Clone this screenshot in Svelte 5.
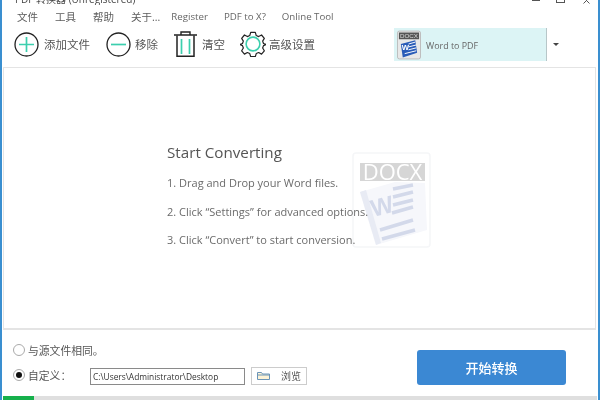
<script>
	const menus = ["文件", "工具", "帮助", "关于..."];
	const links = ["Register", "PDF to X?", "Online Tool"];
	const steps = [
		"1. Drag and Drop your Word files.",
		"2. Click “Settings” for advanced options.",
		"3. Click “Convert” to start conversion."
	];
	let saveMode = $state("custom");
	let outputPath = $state("C:\\Users\\Administrator\\Desktop");
</script>

<div class="window">
	<div class="titlebar">
		<span class="title">PDF 转换器 (Unregistered)</span>
		<div class="controls">
			<span class="min"></span>
			<span class="max"></span>
			<svg width="7" height="4" viewBox="0 0 7 4"><path d="M0 -3 L6.5 3.5 M7 -3 L.5 3.5" stroke="#555" fill="none" /></svg>
		</div>
	</div>

	<nav class="menubar">
		<div class="menus">
			{#each menus as item}
				<span>{item}</span>
			{/each}
		</div>
		<div class="links">
			{#each links as item}
				<span>{item}</span>
			{/each}
		</div>
	</nav>

	<div class="toolbar">
		<button class="tool add">
			<svg width="25" height="25" viewBox="0 0 25 25">
				<circle cx="12.5" cy="12.5" r="11.5" fill="none" stroke="#222" stroke-width="1.3" />
				<path d="M12.5 5v15M5 12.5h15" stroke="#3ccfae" stroke-width="1.7" />
			</svg>
			添加文件
		</button>
		<button class="tool remove">
			<svg width="25" height="25" viewBox="0 0 25 25">
				<circle cx="12.5" cy="12.5" r="11.5" fill="none" stroke="#222" stroke-width="1.3" />
				<path d="M5 12.5h15" stroke="#3ccfae" stroke-width="1.7" />
			</svg>
			移除
		</button>
		<button class="tool clear">
			<svg width="23" height="26" viewBox="0 0 23 26">
				<path d="M0 4h23M7 3.5V1h9v2.5" fill="none" stroke="#222" stroke-width="1.4" />
				<path d="M3 4.5v20.7h17V4.5" fill="none" stroke="#222" stroke-width="1.5" />
				<path d="M7.5 8v15M15.5 8v15" stroke="#3ccfae" stroke-width="1.7" />
			</svg>
			清空
		</button>
		<button class="tool settings">
			<svg width="26" height="26" viewBox="0 0 28 28">
				<path
					d="M11.5 1.5h5l1 3.4 2.6 1.1 3.1-1.7 3 3.6-1.8 3 .9 2.6 3 1v.1l-3 1.1-.9 2.6 1.8 3-3 3.6-3.1-1.7-2.6 1.1-1 3.3h-5l-1-3.3-2.6-1.1-3.1 1.7-3-3.6 1.8-3-.9-2.6-3-1.1v-.1l3-1 .9-2.6-1.8-3 3-3.6 3.1 1.7 2.6-1.1z"
					fill="none"
					stroke="#222"
					stroke-width="1.3"
					stroke-linejoin="round"
				/>
				<circle cx="14" cy="14" r="7.4" fill="none" stroke="#3ccfae" stroke-width="1.7" />
			</svg>
			高级设置
		</button>

		<div class="format">
			<div class="format-current">
				<svg class="doc-icon" width="24" height="30" viewBox="0 0 25 30">
					<rect x="0.5" y="0.5" width="24" height="29" rx="2" fill="#e8e8e8" stroke="#bbb" />
					<rect x="2" y="2" width="21" height="7" fill="#555" />
					<text x="12.5" y="8" text-anchor="middle" class="doc-label">DOCX</text>
					<path d="M4 14l15-4 2 13-15 5z" fill="#2a5cb8" />
					<path d="M12 14l7-2M12 17l8-2M12 20l8-2M8 24l12-3" stroke="#fff" stroke-width="1" />
					<text x="5" y="20" class="doc-w">W</text>
				</svg>
				<span>Word to PDF</span>
			</div>
			<span class="caret"></span>
		</div>
	</div>

	<main class="panel">
		<svg class="watermark" width="80" height="98" viewBox="0 0 80 98">
			<rect x="1" y="1" width="77" height="94" rx="3" fill="#fff" stroke="#f5f6f8" stroke-width="1.5" />
			<rect x="8" y="11" width="65" height="18" fill="#d6d6d6" />
			<text x="40.5" y="27.5" text-anchor="middle" class="wm-label">DOCX</text>
			<path d="M8 40 L43 30 L73 31 L75 78 L24 93z" fill="#f6f7fb" />
			<path d="M8 40 L14 38 L29 91 L24 93z" fill="#e8ebf4" />
			<text x="21" y="65" class="wm-w" transform="rotate(-14 21 65)">W</text>
			<path d="M41 37l20-4M41 45l20-5M41 53l20-5M40 61l21-6M28 78l33-10M30 87l33-9" stroke="#d3d9ea" stroke-width="3.5" />
		</svg>
		<div class="intro">
			<h1>Start Converting</h1>
			{#each steps as step}
				<p>{step}</p>
			{/each}
		</div>
	</main>

	<div class="bottom">
		<div class="output">
			<label class="row">
				<input type="radio" bind:group={saveMode} value="same" />
				<span>与源文件相同。</span>
			</label>
			<label class="row">
				<input type="radio" bind:group={saveMode} value="custom" />
				<span class="custom-label">自定义：</span>
				<input type="text" class="path" bind:value={outputPath} />
				<button class="browse">
					<svg width="13" height="8" viewBox="0 0 13 8">
						<path d="M.5 7.5v-7h4l1 1.5h7v5.5z" fill="#fdf3d6" stroke="#6a94b8" />
						<path d="M.5 3h12" stroke="#6a94b8" />
					</svg>
					<span>浏览</span>
				</button>
			</label>
		</div>
		<button class="start">开始转换</button>
	</div>

	<div class="progress"><div class="bar" style="width: {31}px"></div></div>
</div>

<style>
	:global(body) {
		margin: 0;
		background: #fff;
	}

	.window {
		width: 600px;
		height: 400px;
		box-sizing: border-box;
		border-left: 2px solid #3a8fd0;
		border-right: 2px solid #3a8fd0;
		display: flex;
		flex-direction: column;
		overflow: hidden;
		font-family: "Open Sans", "Noto Sans CJK SC", sans-serif;
		color: #555;
		background: #fff;
		filter: blur(0.3px);
	}

	.titlebar {
		height: 5px;
		position: relative;
		overflow: hidden;
		flex: none;
	}

	.title {
		position: absolute;
		left: 13px;
		top: -8px;
		font-size: 10px;
		line-height: 14px;
		color: #444;
		white-space: nowrap;
	}

	.controls {
		position: absolute;
		left: 530px;
		top: 0;
		display: flex;
		align-items: flex-start;
	}

	.min {
		width: 8px;
		height: 1px;
		background: #555;
	}

	.max {
		width: 7px;
		height: 2px;
		margin-left: 16px;
		border: 1px solid #555;
		border-top: none;
	}

	.controls svg {
		margin-left: 18px;
	}

	.menubar {
		display: flex;
		align-items: center;
		height: 22px;
		padding-left: 15px;
		color: #5c5c5c;
		flex: none;
	}

	.menus {
		display: flex;
		gap: 17px;
		font-size: 10.5px;
	}

	.links {
		display: flex;
		gap: 16px;
		margin-left: 11px;
		font-size: 9.7px;
		color: #666;
	}

	.toolbar {
		height: 40px;
		box-sizing: border-box;
		padding: 0 0 6px 12px;
		display: flex;
		align-items: center;
		flex: none;
	}

	.tool {
		display: flex;
		align-items: center;
		gap: 5px;
		border: none;
		background: none;
		padding: 0;
		font-family: inherit;
		font-size: 11.5px;
		color: #555;
	}

	.remove {
		margin-left: 16px;
		gap: 4px;
	}

	.clear {
		margin-left: 16px;
	}

	.settings {
		margin-left: 15px;
		gap: 3px;
	}

	.format {
		margin-left: 79px;
		display: flex;
		align-items: center;
	}

	.format-current {
		width: 153px;
		height: 33px;
		background: #dcf4f5;
		border-right: 1px solid #b7c6c8;
		display: flex;
		align-items: center;
		gap: 5px;
		font-size: 8.9px;
		color: #666;
		box-sizing: border-box;
		padding: 2px 0 0 3px;
	}

	.doc-icon {
		flex: none;
	}

	.doc-label {
		font-family: "Liberation Sans", sans-serif;
		font-size: 6.5px;
		fill: #ddd;
	}

	.doc-w {
		font-family: "Liberation Sans", sans-serif;
		font-size: 8px;
		font-weight: 700;
		fill: #fff;
	}

	.caret {
		margin-left: 6px;
		width: 0;
		height: 0;
		border-left: 3px solid transparent;
		border-right: 3px solid transparent;
		border-top: 3px solid #444;
	}

	.panel {
		height: 263px;
		margin: 0 2px 0 1px;
		box-sizing: border-box;
		border: 1px solid #e4e4e4;
		border-bottom-width: 2px;
		position: relative;
		flex: none;
		background: #fff;
	}

	.intro {
		position: absolute;
		left: 163px;
		top: 73px;
	}

	h1 {
		margin: 0 0 6px;
		font-size: 15.2px;
		line-height: 22px;
		font-weight: 400;
		color: #555;
	}

	p {
		margin: 0;
		font-size: 11px;
		line-height: 28.5px;
		color: #6b6b6b;
		white-space: nowrap;
	}

	.watermark {
		position: absolute;
		left: 348px;
		top: 84px;
	}

	.wm-label {
		font-family: "Open Sans", sans-serif;
		font-size: 22px;
		fill: #fff;
	}

	.wm-w {
		font-family: "Liberation Sans", sans-serif;
		font-size: 24px;
		font-weight: 700;
		fill: #d3d9ea;
	}

	.bottom {
		flex: 1;
		display: flex;
		padding: 0 32px 0 11px;
		align-items: flex-start;
		justify-content: space-between;
	}

	.output {
		display: flex;
		flex-direction: column;
		gap: 5px;
		padding-top: 10px;
	}

	.row {
		display: flex;
		align-items: center;
		height: 20px;
		font-size: 10.8px;
		color: #555;
	}

	input[type="radio"] {
		appearance: none;
		flex: none;
		width: 12px;
		height: 12px;
		margin: 0 3px 0 0;
		border: 1px solid #aaa;
		border-radius: 50%;
		background: #fff;
		position: relative;
	}

	input[type="radio"]:checked::after {
		content: "";
		position: absolute;
		left: 2px;
		top: 2px;
		width: 6px;
		height: 6px;
		border-radius: 50%;
		background: #111;
	}

	.custom-label {
		width: 62px;
	}

	.path {
		width: 155px;
		height: 17px;
		margin-top: 2px;
		box-sizing: border-box;
		border: 1px solid #8a8a8a;
		padding: 0 2px;
		font-family: "Open Sans", sans-serif;
		font-size: 8.4px;
		color: #333;
		outline: none;
	}

	.browse {
		margin-left: 6px;
		margin-top: 1px;
		width: 56px;
		height: 18px;
		box-sizing: border-box;
		border: 1px solid #ccc;
		background: #fff;
		padding: 0 0 0 5px;
		display: flex;
		align-items: center;
		font-family: inherit;
		font-size: 10px;
		color: #555;
	}

	.browse span {
		margin-left: 11px;
	}

	.start {
		margin-top: 20px;
		width: 149px;
		height: 35px;
		border: none;
		border-radius: 3px;
		background: #3b88d3;
		color: #fff;
		font-family: inherit;
		font-size: 13px;
		font-weight: 500;
	}

	.progress {
		height: 4px;
		background: #dfdfdf;
		margin: 0 1px;
		flex: none;
	}

	.bar {
		height: 100%;
		background: #16b04c;
	}
</style>
